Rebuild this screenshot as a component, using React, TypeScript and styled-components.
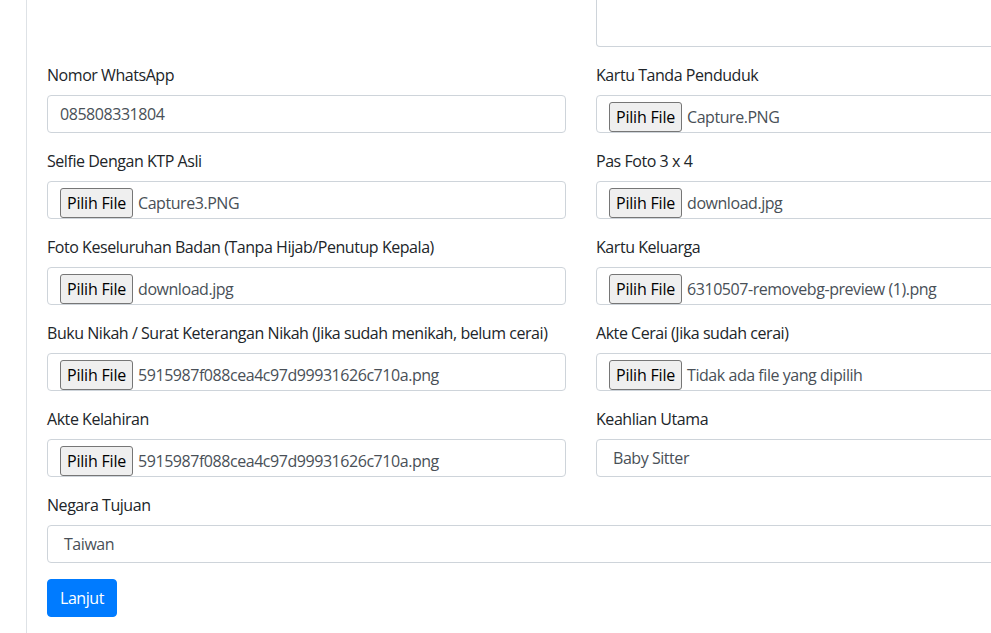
import React from "react";
import styled, { createGlobalStyle } from "styled-components";

const GlobalStyle = createGlobalStyle`
  html, body {
    margin: 0;
    padding: 0;
    background: #ffffff;
    overflow: hidden;
  }
  body {
    font-family: "Open Sans", "Noto Sans", "Liberation Sans", sans-serif;
    font-size: 16px;
    line-height: 24px;
    color: #212529;
    letter-spacing: -0.45px;
  }
  * { box-sizing: border-box; }
`;

const Page = styled.div`
  padding-left: 26px;
  min-height: 100vh;
  width: 1200px;
`;

const Main = styled.main`
  border-left: 1px solid #dee2e6;
  padding-left: 20px;
  min-height: 633px;
`;

const FormGrid = styled.form`
  display: grid;
  grid-template-columns: 519px 519px;
  column-gap: 30px;
  align-items: start;
`;

const Field = styled.div<{ $full?: boolean }>`
  margin-bottom: 16px;
  grid-column: ${(p) => (p.$full ? "1 / -1" : "auto")};
`;

const Label = styled.label`
  display: block;
  margin-bottom: 8px;
  line-height: 24px;
  color: #212529;
  white-space: nowrap;
`;

const Control = styled.div`
  height: 38px;
  border: 1px solid #ced4da;
  border-radius: 4px;
  background: #fff;
  color: #495057;
  line-height: 24px;
  padding: 6px 12px;
  white-space: nowrap;
  overflow: hidden;
`;

const TextAreaStub = styled.div`
  height: 47px;
  border: 1px solid #ced4da;
  border-top: none;
  border-radius: 0 0 4px 4px;
  background: #fff;
`;

const FileControl = styled(Control)`
  display: flex;
  align-items: flex-start;
  padding: 6px 12px 0 12px;
`;

const FileButton = styled.span`
  display: inline-flex;
  align-items: center;
  height: 30px;
  padding: 0 6px;
  margin-right: 5px;
  background: #efefef;
  border: 1px solid #767676;
  border-radius: 3px;
  color: #000;
  letter-spacing: -0.2px;
  flex-shrink: 0;
`;

const FileName = styled.span`
  line-height: 30px;
  color: #495057;
`;

const SelectControl = styled(Control)`
  display: flex;
  align-items: center;
  justify-content: space-between;
  padding: 6px 10px 6px 16px;
`;

const Arrow = styled.span`
  width: 0;
  height: 0;
  border-left: 4px solid transparent;
  border-right: 4px solid transparent;
  border-top: 5px solid #495057;
`;

const SubmitButton = styled.button`
  font-family: inherit;
  font-size: 16px;
  letter-spacing: inherit;
  line-height: 24px;
  padding: 6px 12px;
  height: 38px;
  color: #fff;
  background: #007bff;
  border: 1px solid #007bff;
  border-radius: 4px;
  cursor: pointer;
  grid-column: 1 / -1;
  justify-self: start;
`;

type Item =
  | { kind: "empty" }
  | { kind: "textarea" }
  | { kind: "text"; label: string; value: string }
  | { kind: "file"; label: string; value: string }
  | { kind: "select"; label: string; value: string; full?: boolean };

const items: Item[] = [
  { kind: "empty" },
  { kind: "textarea" },
  { kind: "text", label: "Nomor WhatsApp", value: "085808331804" },
  { kind: "file", label: "Kartu Tanda Penduduk", value: "Capture.PNG" },
  { kind: "file", label: "Selfie Dengan KTP Asli", value: "Capture3.PNG" },
  { kind: "file", label: "Pas Foto 3 x 4", value: "download.jpg" },
  {
    kind: "file",
    label: "Foto Keseluruhan Badan (Tanpa Hijab/Penutup Kepala)",
    value: "download.jpg",
  },
  {
    kind: "file",
    label: "Kartu Keluarga",
    value: "6310507-removebg-preview (1).png",
  },
  {
    kind: "file",
    label: "Buku Nikah / Surat Keterangan Nikah (Jika sudah menikah, belum cerai)",
    value: "5915987f088cea4c97d99931626c710a.png",
  },
  {
    kind: "file",
    label: "Akte Cerai (Jika sudah cerai)",
    value: "Tidak ada file yang dipilih",
  },
  {
    kind: "file",
    label: "Akte Kelahiran",
    value: "5915987f088cea4c97d99931626c710a.png",
  },
  { kind: "select", label: "Keahlian Utama", value: "Baby Sitter" },
  { kind: "select", label: "Negara Tujuan", value: "Taiwan", full: true },
];

function renderItem(item: Item, i: number) {
  switch (item.kind) {
    case "empty":
      return <Field key={i} />;
    case "textarea":
      return (
        <Field key={i}>
          <TextAreaStub />
        </Field>
      );
    case "text":
      return (
        <Field key={i}>
          <Label>{item.label}</Label>
          <Control>{item.value}</Control>
        </Field>
      );
    case "file":
      return (
        <Field key={i}>
          <Label>{item.label}</Label>
          <FileControl>
            <FileButton>Pilih File</FileButton>
            <FileName>{item.value}</FileName>
          </FileControl>
        </Field>
      );
    case "select":
      return (
        <Field key={i} $full={item.full}>
          <Label>{item.label}</Label>
          <SelectControl>
            <span>{item.value}</span>
            <Arrow />
          </SelectControl>
        </Field>
      );
  }
}

export default function App() {
  return (
    <>
      <GlobalStyle />
      <Page>
        <Main>
          <FormGrid onSubmit={(e) => e.preventDefault()}>
            {items.map(renderItem)}
            <SubmitButton type="submit">Lanjut</SubmitButton>
          </FormGrid>
        </Main>
      </Page>
    </>
  );
}
